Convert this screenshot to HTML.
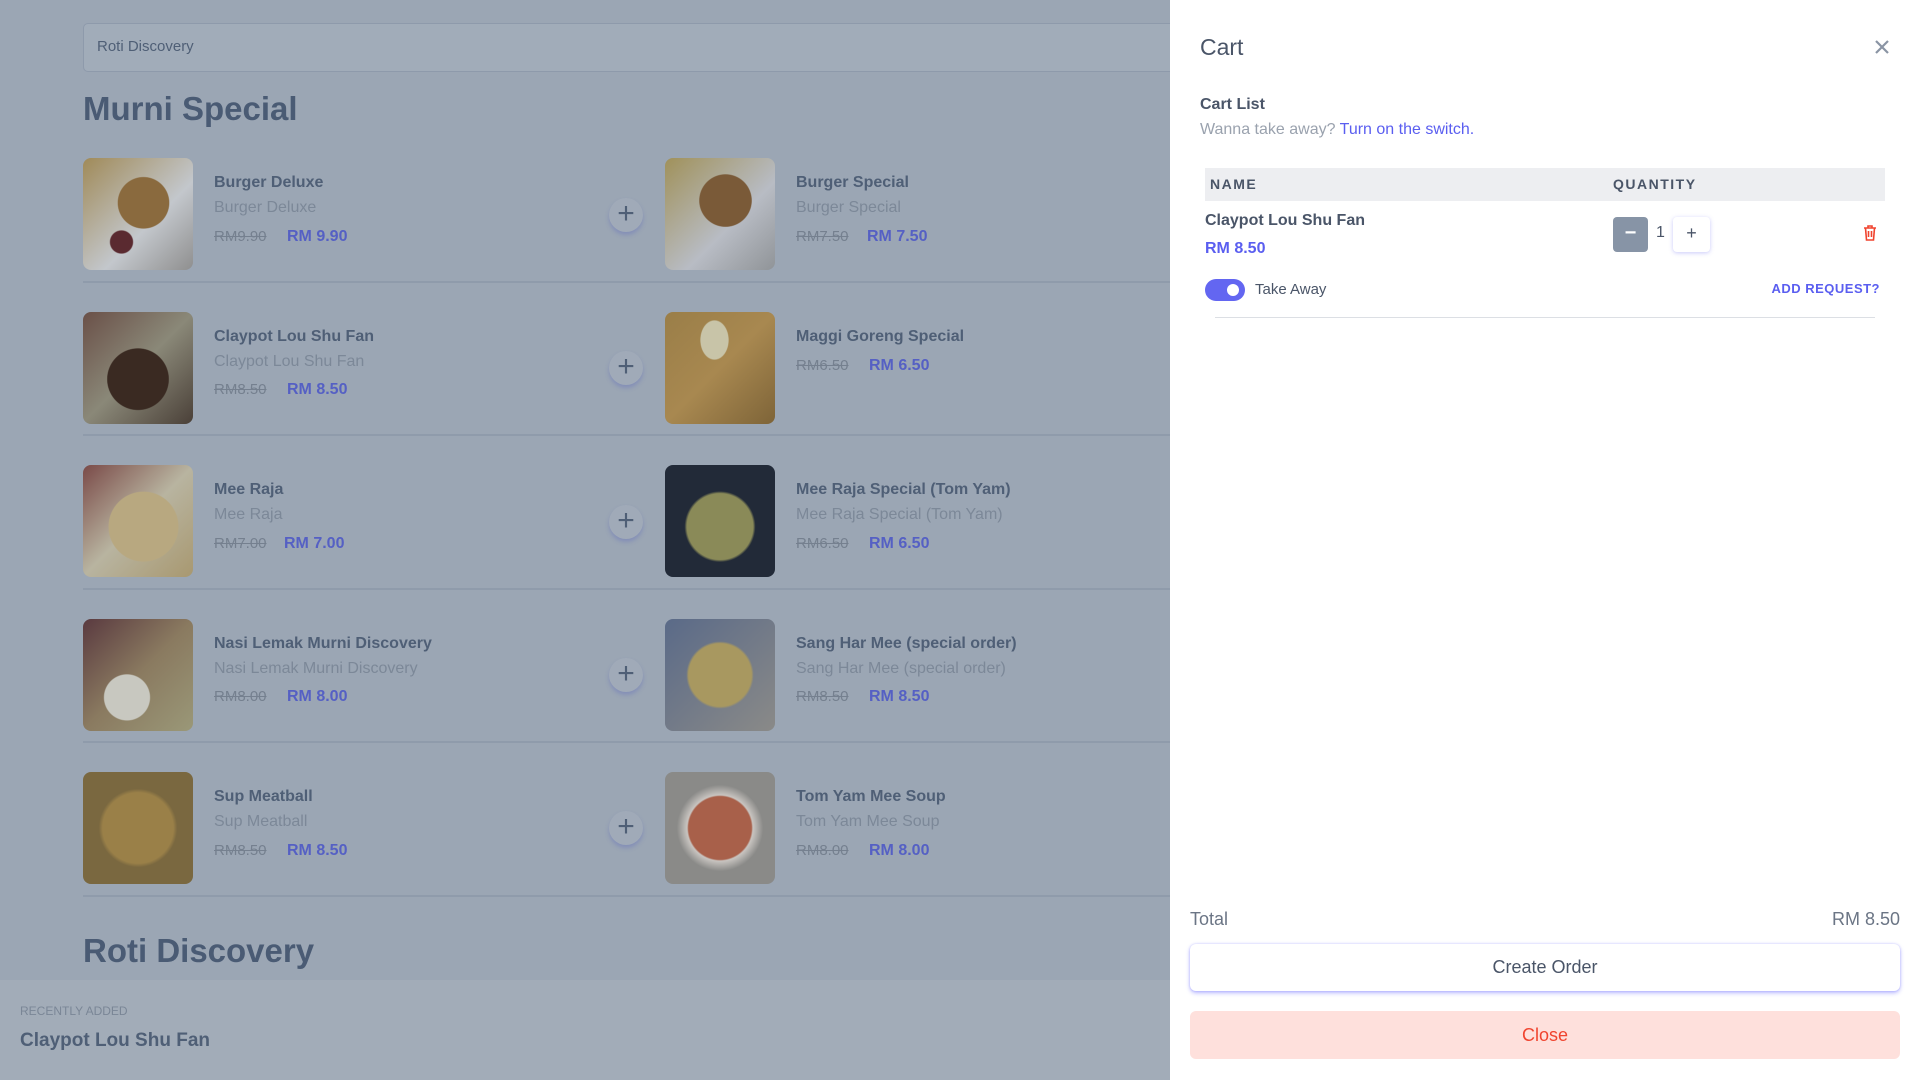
<!DOCTYPE html>
<html><head><meta charset="utf-8"><style>
*{margin:0;padding:0;box-sizing:border-box}
body{width:1920px;height:1080px;overflow:hidden;background:#9ba6b4;font-family:"Liberation Sans",sans-serif;position:relative}
.a{position:absolute;white-space:nowrap}
.search{left:83px;top:23px;width:1100px;height:49px;border:1px solid #8e9aab;border-radius:5px;background:#a1acb9}
.h1{font-weight:bold;font-size:33px;color:#4a5b74}
.img{position:absolute;width:110px;height:112px;border-radius:8px;overflow:hidden}
.nm{font-weight:bold;font-size:16px;color:#4f5f76}
.ds{font-size:16px;color:#7c8898}
.old{font-size:15px;color:#75808f;text-decoration:line-through}
.pr{font-size:16px;font-weight:bold;color:#5560c4}
.plus{position:absolute;width:34px;height:34px;border-radius:50%;background:#a0aab8;box-shadow:0 3px 4px rgba(90,100,190,.35);color:#4f5f76;font-size:30px;line-height:32px;text-align:center;font-weight:300}
.sep{position:absolute;left:83px;width:1087px;height:2px;background:#8f9bab}
.drawer{position:absolute;left:1170px;top:0;width:750px;height:1080px;background:#fff}
</style></head><body>
<div class="a search"></div>
<div class="a" style="left:97px;top:38px;font-size:15px;color:#4f5f76">Roti Discovery</div>
<div class="a h1" style="left:83px;top:90px">Murni Special</div>

<div class="img" style="left:83px;top:158px;background:radial-gradient(circle at 55% 40%,#8a6a3e 0 28%,transparent 29%),radial-gradient(circle at 35% 75%,#5a2a30 0 10%,transparent 11%),linear-gradient(135deg,#a08a58,#c3c7cc 60%,#8f8f8f)"></div>
<div class="img" style="left:665px;top:158px;background:radial-gradient(circle at 55% 38%,#7a5a38 0 28%,transparent 29%),linear-gradient(135deg,#a0915a,#b8bcc4 60%,#909498)"></div>
<div class="img" style="left:83px;top:312px;background:radial-gradient(circle at 50% 60%,#3a2a22 0 35%,transparent 36%),radial-gradient(circle at 50% 55%,#c0b070 0 8%,transparent 9%),linear-gradient(135deg,#6a5048,#8a8878 50%,#4a4038)"></div>
<div class="img" style="left:665px;top:312px;background:radial-gradient(ellipse at 45% 25%,#c8c4a8 0 16%,transparent 17%),linear-gradient(135deg,#9a7e48,#a88850 50%,#7e6438)"></div>
<div class="img" style="left:83px;top:465px;background:radial-gradient(circle at 55% 55%,#b8a880 0 40%,transparent 41%),linear-gradient(135deg,#7a4a48,#b8b4a0 50%,#a89870)"></div>
<div class="img" style="left:665px;top:465px;background:radial-gradient(circle at 50% 55%,#8a8a58 0 40%,transparent 43%),#222a38"></div>
<div class="img" style="left:83px;top:619px;background:radial-gradient(circle at 40% 70%,#c8c8c0 0 22%,transparent 23%),linear-gradient(135deg,#5a3a40,#8a7a60 50%,#9a9878)"></div>
<div class="img" style="left:665px;top:619px;background:radial-gradient(circle at 50% 50%,#a89860 0 40%,transparent 43%),linear-gradient(135deg,#5a6a88,#8a8a88)"></div>
<div class="img" style="left:83px;top:772px;background:radial-gradient(circle at 50% 50%,#9a8048 0 45%,transparent 50%),#7a6840"></div>
<div class="img" style="left:665px;top:772px;background:radial-gradient(circle at 50% 50%,#a8604a 0 40%,#c8c4c0 42%,transparent 55%),#8a8a88"></div>

<div class="a nm" style="left:214px;top:174px">Burger Deluxe</div>
<div class="a ds" style="left:214px;top:199px">Burger Deluxe</div>
<div class="a old" style="left:214px;top:228px">RM9.90</div><div class="a pr" style="left:287px;top:228px">RM 9.90</div>
<div class="a nm" style="left:796px;top:174px">Burger Special</div>
<div class="a ds" style="left:796px;top:199px">Burger Special</div>
<div class="a old" style="left:796px;top:228px">RM7.50</div><div class="a pr" style="left:867px;top:228px">RM 7.50</div>
<div class="plus" style="left:609px;top:198px">+</div>
<div class="sep" style="top:281px"></div>

<div class="a nm" style="left:214px;top:328px">Claypot Lou Shu Fan</div>
<div class="a ds" style="left:214px;top:353px">Claypot Lou Shu Fan</div>
<div class="a old" style="left:214px;top:381px">RM8.50</div><div class="a pr" style="left:287px;top:381px">RM 8.50</div>
<div class="a nm" style="left:796px;top:328px">Maggi Goreng Special</div>
<div class="a old" style="left:796px;top:357px">RM6.50</div><div class="a pr" style="left:869px;top:357px">RM 6.50</div>
<div class="plus" style="left:609px;top:351px">+</div>
<div class="sep" style="top:434px"></div>

<div class="a nm" style="left:214px;top:481px">Mee Raja</div>
<div class="a ds" style="left:214px;top:506px">Mee Raja</div>
<div class="a old" style="left:214px;top:535px">RM7.00</div><div class="a pr" style="left:284px;top:535px">RM 7.00</div>
<div class="a nm" style="left:796px;top:481px">Mee Raja Special (Tom Yam)</div>
<div class="a ds" style="left:796px;top:506px">Mee Raja Special (Tom Yam)</div>
<div class="a old" style="left:796px;top:535px">RM6.50</div><div class="a pr" style="left:869px;top:535px">RM 6.50</div>
<div class="plus" style="left:609px;top:505px">+</div>
<div class="sep" style="top:588px"></div>

<div class="a nm" style="left:214px;top:635px">Nasi Lemak Murni Discovery</div>
<div class="a ds" style="left:214px;top:660px">Nasi Lemak Murni Discovery</div>
<div class="a old" style="left:214px;top:688px">RM8.00</div><div class="a pr" style="left:287px;top:688px">RM 8.00</div>
<div class="a nm" style="left:796px;top:635px">Sang Har Mee (special order)</div>
<div class="a ds" style="left:796px;top:660px">Sang Har Mee (special order)</div>
<div class="a old" style="left:796px;top:688px">RM8.50</div><div class="a pr" style="left:869px;top:688px">RM 8.50</div>
<div class="plus" style="left:609px;top:658px">+</div>
<div class="sep" style="top:741px"></div>

<div class="a nm" style="left:214px;top:788px">Sup Meatball</div>
<div class="a ds" style="left:214px;top:813px">Sup Meatball</div>
<div class="a old" style="left:214px;top:842px">RM8.50</div><div class="a pr" style="left:287px;top:842px">RM 8.50</div>
<div class="a nm" style="left:796px;top:788px">Tom Yam Mee Soup</div>
<div class="a ds" style="left:796px;top:813px">Tom Yam Mee Soup</div>
<div class="a old" style="left:796px;top:842px">RM8.00</div><div class="a pr" style="left:869px;top:842px">RM 8.00</div>
<div class="plus" style="left:609px;top:811px">+</div>
<div class="sep" style="top:895px"></div>

<div class="a h1" style="left:83px;top:932px">Roti Discovery</div>
<div class="a" style="left:0;top:980px;width:1170px;height:100px;background:#a2acb8"></div>
<div class="a" style="left:20px;top:1004px;font-size:12px;color:#7a8696">RECENTLY ADDED</div>
<div class="a" style="left:20px;top:1030px;font-size:19px;font-weight:bold;color:#4f5f76">Claypot Lou Shu Fan</div>

<div class="drawer"></div>
<div class="a" style="left:1200px;top:34px;font-size:23px;color:#4a5568">Cart</div>
<svg class="a" style="left:1874px;top:39px" width="16" height="16"><path d="M2 2L14 14M14 2L2 14" stroke="#8a94a4" stroke-width="2.2"/></svg>
<div class="a" style="left:1200px;top:96px;font-size:16px;font-weight:bold;color:#4a5568">Cart List</div>
<div class="a" style="left:1200px;top:121px;font-size:16px;color:#9aa2ae">Wanna take away? <span style="color:#5a5ef0">Turn on the switch.</span></div>
<div class="a" style="left:1205px;top:168px;width:680px;height:33px;background:#edeef1"></div>
<div class="a" style="left:1210px;top:176px;font-size:14px;font-weight:bold;letter-spacing:1.5px;color:#4a5568">NAME</div>
<div class="a" style="left:1613px;top:176px;font-size:14px;font-weight:bold;letter-spacing:1.5px;color:#4a5568">QUANTITY</div>
<div class="a" style="left:1205px;top:212px;font-size:16px;font-weight:bold;color:#4a5568">Claypot Lou Shu Fan</div>
<div class="a" style="left:1205px;top:240px;font-size:16px;font-weight:bold;color:#5a5ef0">RM 8.50</div>
<div class="a" style="left:1613px;top:217px;width:35px;height:35px;border-radius:4px;background:#8794a6;color:#fff;text-align:center;line-height:33px;font-size:20px;font-weight:bold">−</div>
<div class="a" style="left:1656px;top:224px;font-size:16px;color:#4a5568">1</div>
<div class="a" style="left:1673px;top:217px;width:37px;height:35px;border-radius:4px;background:#fff;box-shadow:0 1px 4px rgba(100,100,240,.35);color:#4a5568;text-align:center;line-height:33px;font-size:18px">+</div>
<svg class="a" style="left:1863px;top:224px" width="14" height="18" viewBox="0 0 14 18"><path d="M1 4H13M5 4V2H9V4M2.5 4L3.5 16H10.5L11.5 4M5.5 7V13M8.5 7V13" stroke="#f0442f" stroke-width="1.6" fill="none"/></svg>
<div class="a" style="left:1205px;top:279px;width:40px;height:22px;border-radius:11px;background:#6366f1"></div>
<div class="a" style="left:1227px;top:284px;width:12px;height:12px;border-radius:50%;background:#fff"></div>
<div class="a" style="left:1255px;top:281px;font-size:15px;color:#4a5568">Take Away</div>
<div class="a" style="right:40px;top:281px;font-size:13px;font-weight:bold;letter-spacing:.5px;color:#5a5ef0">ADD REQUEST?</div>
<div class="a" style="left:1215px;top:317px;width:660px;height:1px;background:#dcdfe4"></div>
<div class="a" style="left:1190px;top:909px;font-size:18px;color:#6b7585">Total</div>
<div class="a" style="right:20px;top:909px;font-size:18px;color:#6b7585">RM 8.50</div>
<div class="a" style="left:1190px;top:944px;width:710px;height:47px;border-radius:6px;background:#fff;box-shadow:0 2px 4px rgba(100,100,255,.45),0 0 2px rgba(100,100,255,.3);text-align:center;line-height:47px;font-size:18px;color:#4a5568">Create Order</div>
<div class="a" style="left:1190px;top:1011px;width:710px;height:48px;border-radius:6px;background:#fee0dc;text-align:center;line-height:48px;font-size:18px;color:#f0442f">Close</div>
</body></html>
